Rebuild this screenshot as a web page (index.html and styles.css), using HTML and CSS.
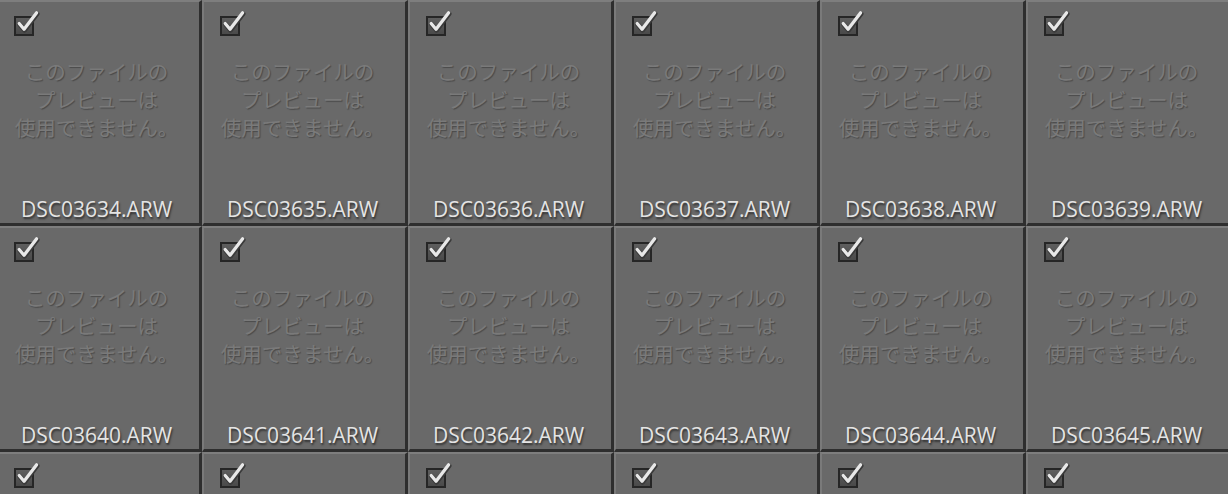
FILE: index.html
```html
<!DOCTYPE html>
<html lang="ja">
    <head>
        <meta charset="UTF-8" />
        <meta name="viewport" content="width=device-width, initial-scale=1.0" />
        <title>Grid</title>
        <link rel="stylesheet" href="styles.css">
    </head>

    <body>
        <svg width="0" height="0" style="position: absolute">
            <symbol id="tick" viewBox="0 0 30 30">
                <path d="M9 17 L14 23 L27 6" fill="none" stroke="#3a3a3a" stroke-width="5" stroke-linecap="round" stroke-linejoin="round" />
                <path d="M8.5 16 L13.5 22 L26.5 5" fill="none" stroke="#e8e8e8" stroke-width="3.4" stroke-linecap="round" stroke-linejoin="round" />
            </symbol>
        </svg>

        <div class="grid" id="grid"></div>

        <script>
            // Build the thumbnail cells
            const grid = document.getElementById("grid");
            for (let i = 0; i < 18; i++) {
                const num = 3634 + i;
                const cell = document.createElement("div");
                cell.className = "thumb";
                cell.innerHTML =
                    '<span class="flag"><svg class="tick"><use href="#tick" /></svg></span>' +
                    '<p class="note">このファイルの<br>プレビューは<br>使用できません。</p>' +
                    '<div class="name">DSC0' + num + '.ARW</div>';
                grid.appendChild(cell);
            }
        </script>
    </body>
</html>
```

FILE: styles.css
```css
html, body {
    height: 494px;
}

body {
    margin: 0;
    padding: 0;
    background-color: #2c2c2c;
    overflow: hidden;
    font-family: "Open Sans", "Noto Sans CJK JP", sans-serif;
}

.grid {
    display: grid;
    grid-template-columns: repeat(6, 206px);
    grid-auto-rows: 226px;
    margin-left: -4px;
    width: 1236px;
}

.thumb {
    display: flex;
    flex-direction: column;
    align-items: center;
    background-color: #696969;
    border-top: 2px solid #7e7e7e;
    border-left: 2px solid #7a7a7a;
    border-right: 3px solid #2e2e2e;
    border-bottom: 3px solid #2e2e2e;
    overflow: hidden;
}

.flag {
    position: relative;
    align-self: flex-start;
    width: 16px;
    height: 16px;
    margin: 14px 0 0 16px;
    border: 2px solid #262626;
    background: linear-gradient(#5e5e5e, #4a4a4a);
}

.tick {
    position: absolute;
    left: -5px;
    top: -10px;
    width: 29px;
    height: 29px;
}

.note {
    margin: 21px 0 0;
    padding-right: 4px;
    font-family: "Noto Sans CJK JP", sans-serif;
    font-size: 20.5px;
    line-height: 28px;
    text-align: center;
    color: #7a7a7a;
    text-shadow: 1px 1px 1px rgba(0, 0, 0, 0.3);
}

.name {
    margin-top: auto;
    margin-bottom: 2px;
    padding-right: 4px;
    font-size: 21px;
    line-height: 24px;
    color: #e4e4e4;
    text-shadow: 1px 2px 2px rgba(0, 0, 0, 0.55);
}
```
